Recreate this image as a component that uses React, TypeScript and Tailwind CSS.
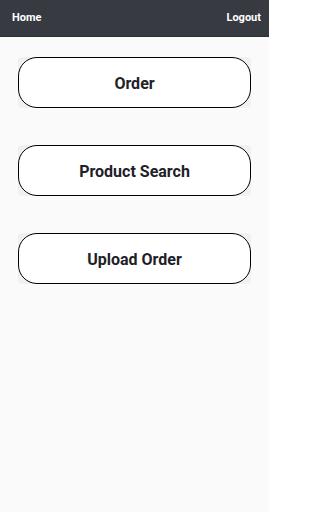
import React from 'react';

const items = ['Order', 'Product Search', 'Upload Order'];

export default function App() {
    return (
        <div className="w-[269px] min-h-[512px] bg-[#fafafa] font-['Roboto',sans-serif] overflow-hidden">
            {/* Top bar */}
            <div className="h-[37px] bg-[#373a41] border-b border-[#2c2f35] flex items-center justify-between pl-[12px] pr-[8px] pt-[1px]">
                <span className="text-white font-bold text-[11px]">Home</span>
                <span className="text-white font-bold text-[11px]">Logout</span>
            </div>

            <div className="flex flex-col gap-[37px] px-[18px] pt-[20px]">
                {items.map((item) => (
                    <div key={item} className="bg-[#f0f0f0] rounded-[4px]">
                        <button className="w-full h-[51px] bg-white border-[1.5px] border-black rounded-[19px] flex items-center justify-center pt-[2px] text-[16px] font-bold text-[#1e2128]">
                            {item}
                        </button>
                    </div>
                ))}
            </div>
        </div>
    );
}
